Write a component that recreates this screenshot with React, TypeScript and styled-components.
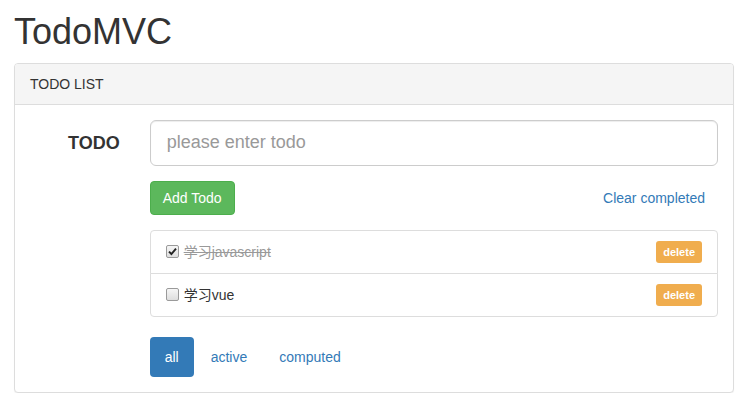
import React, { useState } from "react";
import styled, { createGlobalStyle, css } from "styled-components";

const Global = createGlobalStyle`
  html, body { margin: 0; padding: 0; background: #fff; }
  body {
    font-family: "Liberation Sans", Arial, "Noto Sans CJK SC", sans-serif;
    font-size: 14px;
    line-height: 1.42857;
    color: #333;
  }
  * { box-sizing: border-box; }
`;

const Page = styled.div`
  padding: 0 19px 0 14px;
  width: 753px;
`;

const Title = styled.h1`
  font-size: 36px;
  font-weight: 500;
  line-height: 1.1;
  margin: 12px 0 11px;
  color: #333;
`;

const Panel = styled.section`
  border: 1px solid #ddd;
  border-radius: 4px;
  background: #fff;
  box-shadow: 0 1px 1px rgba(0, 0, 0, 0.05);
`;

const PanelHeading = styled.div`
  padding: 10px 15px;
  background: #f5f5f5;
  border-bottom: 1px solid #ddd;
  border-radius: 3px 3px 0 0;
  color: #333;
  font-size: 14px;
  line-height: 20px;
`;

const PanelBody = styled.div`
  padding: 15px 15px 15px 0;
  display: grid;
  grid-template-columns: 119.67px 1fr;
`;

const Label = styled.label`
  grid-column: 1;
  text-align: right;
  padding-right: 15px;
  font-weight: 700;
  font-size: 18px;
  line-height: 46px;
  height: 46px;
  color: #333;
`;

const Col = styled.div`
  grid-column: 2;
  padding-left: 15px;
`;

const Input = styled.input`
  display: block;
  width: 100%;
  height: 46px;
  padding: 10px 16px;
  font-size: 18px;
  line-height: 1.33;
  border: 1px solid #ccc;
  border-radius: 6px;
  color: #555;
  font-family: inherit;
  box-shadow: inset 0 1px 1px rgba(0, 0, 0, 0.075);
  outline: none;
  &::placeholder { color: #999; }
`;

const ActionRow = styled.div`
  margin-top: 15px;
  display: flex;
  justify-content: space-between;
  align-items: center;
`;

const Btn = styled.button<{ $variant: "success" | "link" }>`
  font-family: inherit;
  font-size: 14px;
  line-height: 20px;
  padding: 6px 12px;
  border-radius: 4px;
  border: 1px solid transparent;
  cursor: pointer;
  ${(p) =>
    p.$variant === "success"
      ? css`
          background: #5cb85c;
          border-color: #4cae4c;
          color: #fff;
        `
      : css`
          background: transparent;
          color: #337ab7;
        `}
`;

const List = styled.ul`
  list-style: none;
  margin: 15px 0 20px;
  padding: 0;
`;

const Item = styled.li`
  display: flex;
  align-items: center;
  justify-content: space-between;
  padding: 10px 15px;
  border: 1px solid #ddd;
  background: #fff;
  & + & { margin-top: -1px; }
  &:first-child { border-radius: 4px 4px 0 0; }
  &:last-child { border-radius: 0 0 4px 4px; }
`;

const CheckLabel = styled.label<{ $done: boolean }>`
  display: flex;
  align-items: center;
  font-size: 14px;
  line-height: 20px;
  color: ${(p) => (p.$done ? "#999" : "#333")};
  text-decoration: ${(p) => (p.$done ? "line-through" : "none")};
  cursor: pointer;
`;

const Box = styled.span`
  width: 13px;
  height: 13px;
  margin-right: 5px;
  border: 1px solid #9a9a9a;
  border-radius: 2px;
  background: linear-gradient(#f6f6f6, #dedede);
  display: inline-flex;
  align-items: center;
  justify-content: center;
  flex: none;
`;

const DeleteBtn = styled.button`
  font-family: inherit;
  font-size: 11px;
  font-weight: 700;
  line-height: 18px;
  padding: 2px 7px;
  border-radius: 3px;
  border: none;
  background: #f0ad4e;
  color: #fff;
  cursor: pointer;
`;

const Pills = styled.ul`
  list-style: none;
  margin: 0;
  padding: 0;
  display: flex;
  gap: 2px;
`;

const Pill = styled.a<{ $active: boolean }>`
  display: block;
  padding: 10px 15px;
  line-height: 20px;
  font-size: 14px;
  border-radius: 4px;
  text-decoration: none;
  cursor: pointer;
  color: ${(p) => (p.$active ? "#fff" : "#337ab7")};
  background: ${(p) => (p.$active ? "#337ab7" : "transparent")};
`;

type Todo = { id: number; text: string; done: boolean };

export default function App() {
  const [todos, setTodos] = useState<Todo[]>([
    { id: 1, text: "学习javascript", done: true },
    { id: 2, text: "学习vue", done: false },
  ]);
  const [filter, setFilter] = useState("all");

  const toggle = (id: number) =>
    setTodos((t) => t.map((x) => (x.id === id ? { ...x, done: !x.done } : x)));

  return (
    <Page>
      <Global />
      <Title>TodoMVC</Title>
      <Panel>
        <PanelHeading>TODO LIST</PanelHeading>
        <PanelBody>
          <Label>TODO</Label>
          <Col>
            <Input placeholder="please enter todo" />
            <ActionRow>
              <Btn $variant="success">Add Todo</Btn>
              <Btn $variant="link">Clear completed</Btn>
            </ActionRow>
            <List>
              {todos.map((t) => (
                <Item key={t.id}>
                  <CheckLabel $done={t.done} onClick={() => toggle(t.id)}>
                    <Box>
                      {t.done && (
                        <svg width="9" height="9" viewBox="0 0 9 9">
                          <path d="M1 4.6 L3.4 7 L8 1.6" fill="none" stroke="#222" strokeWidth="1.9" />
                        </svg>
                      )}
                    </Box>
                    {t.text}
                  </CheckLabel>
                  <DeleteBtn>delete</DeleteBtn>
                </Item>
              ))}
            </List>
            <Pills>
              {["all", "active", "computed"].map((f) => (
                <li key={f}>
                  <Pill $active={filter === f} onClick={() => setFilter(f)}>
                    {f}
                  </Pill>
                </li>
              ))}
            </Pills>
          </Col>
        </PanelBody>
      </Panel>
    </Page>
  );
}
